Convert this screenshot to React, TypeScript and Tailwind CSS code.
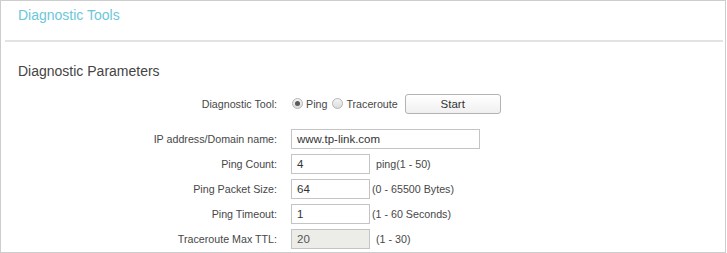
import React from "react";

function Radio({ checked }: { checked?: boolean }) {
  return (
    <span className="inline-flex items-center justify-center w-[11px] h-[11px] rounded-full border border-[#b4b4b4] bg-gradient-to-b from-[#f4f4f4] to-[#dcdcdc] shrink-0">
      {checked ? <span className="w-[5px] h-[5px] rounded-full bg-[#5a5a5a]" /> : null}
    </span>
  );
}

function Row({
  label,
  value,
  width,
  hint,
  hintGap,
  disabled,
}: {
  label: string;
  value: string;
  width: string;
  hint?: string;
  hintGap?: string;
  disabled?: boolean;
}) {
  return (
    <div className="flex items-center h-[20px]">
      <div className="w-[276px] text-right text-[10.7px] text-[#474747] leading-[20px]">{label}</div>
      <div
        className={
          "ml-[14px] h-[20px] border border-[#c4c4c4] pl-[5px] flex items-center text-[11.5px] leading-[18px] " +
          width +
          (disabled ? " bg-[#ecece8] text-[#555]" : " bg-white text-[#333]")
        }
      >
        {value}
      </div>
      {hint ? (
        <div className={"text-[10.7px] text-[#474747] leading-[20px] " + (hintGap ?? "")}>{hint}</div>
      ) : null}
    </div>
  );
}

export default function App() {
  return (
    <div className="w-[727px] h-[253px] bg-white font-['Liberation_Sans',Arial,sans-serif]">
      <div className="w-[726px] h-[253px] border border-[#cdcdcd] flex flex-col overflow-hidden">
        <div className="h-[39px] pl-[17px] pt-[6px] text-[14px] leading-[16px] text-[#6cc6d9]">
          Diagnostic Tools
        </div>
        <div className="ml-[4px] mr-[2px] h-[2px] bg-[#e2e2e2]" />
        <div className="mt-[20px] pl-[17px] text-[14px] leading-[18px] text-[#444]">
          Diagnostic Parameters
        </div>
        <div className="mt-[14px] flex items-center h-[20px]">
          <div className="w-[276px] text-right text-[10.7px] text-[#474747] leading-[20px]">
            Diagnostic Tool:
          </div>
          <div className="ml-[15px] flex items-center">
            <Radio checked />
            <span className="ml-[3px] text-[10.7px] text-[#474747]">Ping</span>
            <span className="ml-[5px] flex">
              <Radio />
            </span>
            <span className="ml-[3px] text-[10.7px] text-[#474747]">Traceroute</span>
          </div>
          <button className="ml-[7px] w-[96px] h-[20px] rounded-[3px] border border-[#b3b3b3] bg-gradient-to-b from-white to-[#f0f0f0] text-[11.5px] text-[#333] leading-[18px]">
            Start
          </button>
        </div>
        <div className="mt-[15px] flex flex-col gap-[5px]">
          <Row label="IP address/Domain name:" value="www.tp-link.com" width="w-[189px]" />
          <Row label="Ping Count:" value="4" width="w-[79px]" hint="ping(1 - 50)" hintGap="ml-[6px]" />
          <Row label="Ping Packet Size:" value="64" width="w-[79px]" hint="(0 - 65500 Bytes)" hintGap="ml-[2px]" />
          <Row label="Ping Timeout:" value="1" width="w-[79px]" hint="(1 - 60 Seconds)" hintGap="ml-[2px]" />
          <Row
            label="Traceroute Max TTL:"
            value="20"
            width="w-[79px]"
            hint="(1 - 30)"
            hintGap="ml-[6px]"
            disabled
          />
        </div>
      </div>
    </div>
  );
}
